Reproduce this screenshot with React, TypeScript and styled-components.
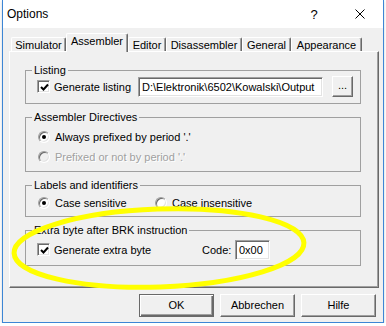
import styled, { createGlobalStyle } from 'styled-components'

const GlobalStyle = createGlobalStyle`
  body {
    margin: 0;
    background: #ffffff;
    font-family: "Liberation Sans", Arial, sans-serif;
    font-size: 11px;
    color: #000;
  }
`

const tabs = [
    { label: 'Simulator', width: 55 },
    { label: 'Assembler', width: 62, active: true },
    { label: 'Editor', width: 38 },
    { label: 'Disassembler', width: 76 },
    { label: 'General', width: 49 },
    { label: 'Appearance', width: 71 },
]

const CheckMark = () => (
    <svg width="9" height="9" viewBox="0 0 9 9">
        <path d="M1 4 L3.5 6.5 L8 1.5" stroke="#000" strokeWidth="2" fill="none" />
    </svg>
)

const CloseIcon = () => (
    <svg width="10" height="10" viewBox="0 0 10 10">
        <path d="M0.5 0.5 L9.5 9.5 M9.5 0.5 L0.5 9.5" stroke="#000" strokeWidth="1" fill="none" />
    </svg>
)

const App = () => {
    return (
        <>
            <GlobalStyle />
            <Window>
                <TitleBar>
                    <Title>Options</Title>
                    <CaptionButton>?</CaptionButton>
                    <CaptionButton><CloseIcon /></CaptionButton>
                </TitleBar>
                <Body>
                    <TabStrip>
                        {tabs.map(t => (
                            <Tab key={t.label} $active={t.active} $width={t.width}>{t.label}</Tab>
                        ))}
                    </TabStrip>
                    <Panel>
                        <Group $bottom={6}>
                            <Legend>Listing</Legend>
                            <Row $top={-1} $height={21}>
                                <Check><CheckMark /></Check>
                                <Label $width={84}>Generate listing</Label>
                                <TextInput $width={185}>D:\Elektronik\6502\Kowalski\Output</TextInput>
                                <SmallButton>...</SmallButton>
                            </Row>
                        </Group>
                        <Group $bottom={4}>
                            <Legend>Assembler Directives</Legend>
                            <Row $top={3} $height={20}>
                                <Radio $checked />
                                <Label>Always prefixed by period '.'</Label>
                            </Row>
                            <Row $height={20}>
                                <Radio $disabled />
                                <Label $disabled>Prefixed or not by period '.'</Label>
                            </Row>
                        </Group>
                        <Group $bottom={3}>
                            <Legend>Labels and identifiers</Legend>
                            <Row $top={1} $height={20}>
                                <Radio $checked />
                                <Label $width={99}>Case sensitive</Label>
                                <Radio />
                                <Label>Case insensitive</Label>
                            </Row>
                        </Group>
                        <Group $bottom={6}>
                            <Legend>Extra byte after BRK instruction</Legend>
                            <Row $top={3} $height={19}>
                                <Check><CheckMark /></Check>
                                <Label $width={148}>Generate extra byte</Label>
                                <Label $width={33}>Code:</Label>
                                <TextInput $width={35}>0x00</TextInput>
                            </Row>
                        </Group>
                    </Panel>
                    <ButtonRow>
                        <DialogButton $default>OK</DialogButton>
                        <DialogButton>Abbrechen</DialogButton>
                        <DialogButton>Hilfe</DialogButton>
                    </ButtonRow>
                </Body>
                <Highlight width="382" height="323" viewBox="0 0 382 323">
                    <ellipse cx="156" cy="248" rx="145" ry="39" transform="rotate(-2 156 248)"
                        fill="none" stroke="#ffff00" strokeWidth="5" />
                </Highlight>
            </Window>
        </>
    )
}

const Window = styled.div`
  position: relative;
  width: 380px;
  margin-left: 2px;
  border: 1px solid #3d86d5;
  border-top: none;
  box-shadow: 0 1px 3px rgba(0, 0, 0, 0.18);
`

const TitleBar = styled.div`
  display: flex;
  align-items: center;
  height: 28px;
  background: #fff;
`

const Title = styled.div`
  flex: 1;
  padding-left: 4px;
  font-size: 12px;
`

const CaptionButton = styled.div`
  width: 46px;
  height: 28px;
  display: flex;
  align-items: center;
  justify-content: center;
  font-size: 13px;
`

const Body = styled.div`
  background: #f0f0f0;
  height: 289px;
  padding: 5px 5px 0 6px;
`

const TabStrip = styled.div`
  display: flex;
  align-items: flex-end;
  height: 18px;
  margin-left: 2px;
`

const Tab = styled.div<{ $active?: boolean; $width: number }>`
  position: relative;
  z-index: ${p => (p.$active ? 2 : 1)};
  box-sizing: border-box;
  width: ${p => p.$width}px;
  height: ${p => (p.$active ? 19 : 14)}px;
  margin-bottom: ${p => (p.$active ? -1 : 0)}px;
  background: #f0f0f0;
  border-top: 1px solid #fff;
  border-left: 1px solid #fff;
  border-right: 1px solid #696969;
  box-shadow: inset -1px 0 0 #a0a0a0;
  border-radius: 2px 2px 0 0;
  text-align: center;
  line-height: ${p => (p.$active ? 14 : 15)}px;
`

const Panel = styled.div`
  box-sizing: border-box;
  width: 370px;
  height: 237px;
  padding: 12px 0 0 15px;
  border-top: 1px solid #fff;
  border-left: 1px solid #fff;
  border-right: 1px solid #696969;
  border-bottom: 1px solid #696969;
  box-shadow: inset -1px -1px 0 #a0a0a0;
  display: flex;
  flex-direction: column;
  gap: 7px;
`

const Group = styled.fieldset<{ $bottom: number }>`
  margin: 0;
  width: 336px;
  box-sizing: border-box;
  padding: 0 0 ${p => p.$bottom}px 11px;
  border: 1px solid #a0a0a0;
  min-inline-size: 0;
`

const Legend = styled.legend`
  margin-left: -5px;
  padding: 0 2px;
  line-height: 13px;
`

const Row = styled.div<{ $top?: number; $height: number }>`
  display: flex;
  align-items: center;
  height: ${p => p.$height}px;
  margin-top: ${p => p.$top ?? 0}px;
`

const Check = styled.div`
  box-sizing: border-box;
  width: 13px;
  height: 13px;
  flex: none;
  margin-right: 4px;
  background: #fff;
  border: 1px solid;
  border-color: #a0a0a0 #fff #fff #a0a0a0;
  box-shadow: inset 1px 1px 0 #696969, inset -1px -1px 0 #e3e3e3;
  display: flex;
  align-items: center;
  justify-content: center;
  padding: 1px 0 0 1px;
`

const Radio = styled.div<{ $checked?: boolean; $disabled?: boolean }>`
  position: relative;
  box-sizing: border-box;
  width: 12px;
  height: 12px;
  flex: none;
  margin: 0 5px 0 1px;
  border-radius: 50%;
  background: ${p => (p.$disabled ? '#f0f0f0' : '#fff')};
  border: 1px solid;
  border-color: #a0a0a0 #fff #fff #a0a0a0;
  box-shadow: inset 1px 1px 0 #696969, inset -1px -1px 0 #e3e3e3;
  &::after {
    content: '';
    display: ${p => (p.$checked ? 'block' : 'none')};
    position: absolute;
    left: 3px;
    top: 3px;
    width: 4px;
    height: 4px;
    border-radius: 50%;
    background: #000;
  }
`

const Label = styled.span<{ $width?: number; $disabled?: boolean }>`
  ${p => (p.$width ? `width: ${p.$width}px; flex: none;` : '')}
  white-space: nowrap;
  color: ${p => (p.$disabled ? '#a0a0a0' : '#000')};
  text-shadow: ${p => (p.$disabled ? '1px 1px 0 #fff' : 'none')};
`

const TextInput = styled.div<{ $width: number }>`
  box-sizing: border-box;
  width: ${p => p.$width}px;
  height: 20px;
  flex: none;
  padding: 0 3px;
  background: #fff;
  border: 1px solid;
  border-color: #a0a0a0 #fff #fff #a0a0a0;
  box-shadow: inset 1px 1px 0 #696969, inset -1px -1px 0 #e3e3e3;
  line-height: 18px;
  white-space: nowrap;
  overflow: hidden;
`

const SmallButton = styled.div`
  box-sizing: border-box;
  width: 21px;
  height: 21px;
  margin-left: 9px;
  background: #f0f0f0;
  border: 1px solid;
  border-color: #fff #696969 #696969 #fff;
  box-shadow: inset -1px -1px 0 #a0a0a0;
  text-align: center;
  line-height: 16px;
`

const ButtonRow = styled.div`
  display: flex;
  justify-content: flex-end;
  gap: 6px;
  margin-top: 6px;
  padding-right: 2px;
`

const DialogButton = styled.div<{ $default?: boolean }>`
  box-sizing: border-box;
  width: 75px;
  height: 23px;
  background: #f0f0f0;
  border: 1px solid;
  border-color: ${p => (p.$default ? '#696969' : '#fff #696969 #696969 #fff')};
  box-shadow: ${p => (p.$default
        ? 'inset 1px 1px 0 #fff, inset -1px -1px 0 #696969, inset -2px -2px 0 #a0a0a0'
        : 'inset -1px -1px 0 #a0a0a0')};
  text-align: center;
  line-height: 21px;
`

const Highlight = styled.svg`
  position: absolute;
  left: 0;
  top: 0;
  pointer-events: none;
`

export default App
